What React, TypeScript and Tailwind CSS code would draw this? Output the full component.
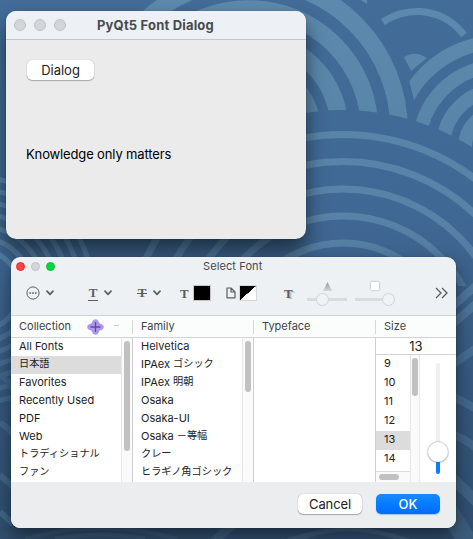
import React from "react";

const collections = ["All Fonts", "日本語", "Favorites", "Recently Used", "PDF", "Web", "トラディショナル", "ファン"];
const families = ["Helvetica", "IPAex ゴシック", "IPAex 明朝", "Osaka", "Osaka-UI", "Osaka －等幅", "クレー", "ヒラギノ角ゴシック"];
const sizes = ["9", "10", "11", "12", "13", "14"];

type Ring = { cx: number; cy: number; r: number; w: number };

const rings = (cx: number, cy: number, radii: number[], w: number): Ring[] => radii.map((r) => ({ cx, cy, r, w }));

function Rings({ items }: { items: Ring[] }) {
  return (
    <>
      {items.map((c) => (
        <circle key={`${c.cx}-${c.r}`} cx={c.cx} cy={c.cy} r={c.r} fill="none" stroke="url(#wave)" strokeWidth={c.w} />
      ))}
    </>
  );
}

function Wallpaper() {
  return (
    <svg className="absolute inset-0" width="473" height="539" viewBox="0 0 473 539">
      <defs>
        <linearGradient id="sea" gradientUnits="userSpaceOnUse" x1="0" y1="0" x2="0" y2="539">
          <stop offset="0" stopColor="#436c98" />
          <stop offset="0.4" stopColor="#406894" />
          <stop offset="0.7" stopColor="#36597f" />
          <stop offset="1" stopColor="#2f4e6f" />
        </linearGradient>
        <linearGradient id="wave" gradientUnits="userSpaceOnUse" x1="0" y1="0" x2="0" y2="539">
          <stop offset="0" stopColor="#5c89ad" />
          <stop offset="0.4" stopColor="#5882a7" />
          <stop offset="0.7" stopColor="#446a8f" />
          <stop offset="1" stopColor="#3d5f80" />
        </linearGradient>
      </defs>
      <rect width="473" height="539" fill="url(#sea)" />
      <path d="M361 0h6v4z" fill="url(#wave)" />
      <path d="M383 22Q399 11 420 11.5Q447 13 464 35" fill="none" stroke="url(#wave)" strokeWidth="7" />
      <circle cx="495" cy="141" r="104" fill="url(#sea)" />
      <path d="M404 57Q415 50 427 58L411 71Z" fill="url(#wave)" />
      <Rings items={rings(500, 147, [105, 81, 57, 35], 14)} />
      <circle cx="248.6" cy="130" r="168" fill="url(#sea)" />
      <Rings items={rings(248.6, 130, [150.5, 121, 91, 63, 30], 17.5)} />
      <Rings items={rings(-20, 290, [40, 52, 64, 76, 88, 100, 112], 5)} />
      <path d="M100 600V353A243 243 0 0 1 586 353V600Z" fill="url(#sea)" />
      <Rings items={rings(343, 353, [218.5, 191.5, 164, 137, 110], 7)} />
      <rect x="456" y="286" width="17" height="253" fill="url(#sea)" />
      <g stroke="url(#wave)" strokeWidth="8" fill="none">
        <path d="M453 306L478 284M454 323L478 302M453 364L478 347M453 397Q465 402 478 410M454 435Q465 439 478 449" />
        <path d="M450 476L478 503" strokeWidth="11" />
      </g>
      <rect y="528" width="473" height="11" fill="#304e6e" />
      <path d="M25 539Q100 517 178 539M55 539Q100 530 145 539" fill="none" stroke="#385775" strokeWidth="4" />
      <path d="M210 539L222 528H236L223 539ZM285 539Q350 516 410 539L395 539Q345 524 306 539ZM438 515L456 505L473 532V539H455Z" fill="#3d5d7c" />
      <path d="M0 375Q8 380 13 389M0 423Q8 427 13 435M0 475L13 487M0 512L13 524" stroke="#416688" strokeWidth="6" fill="none" />
    </svg>
  );
}

function Chevron() {
  return (
    <svg width="8" height="6" viewBox="0 0 8 6">
      <path d="M1 1.2L4 4.4L7 1.2" fill="none" stroke="#5c5f61" strokeWidth="1.7" strokeLinecap="round" strokeLinejoin="round" />
    </svg>
  );
}

function MiniSlider({ end }: { end?: boolean }) {
  return (
    <div className="flex w-10 flex-col items-center">
      <div className="flex h-[13px] items-center">
        {end ? (
          <div className="h-2 w-2 rounded-[1px] bg-white shadow-[0_0_2px_#888]" />
        ) : (
          <svg width="9" height="9" viewBox="0 0 9 9">
            <defs>
              <linearGradient id="tri" x1="0" y1="0" x2="0" y2="1">
                <stop offset="0" stopColor="#929597" />
                <stop offset="1" stopColor="#d5d8da" />
              </linearGradient>
            </defs>
            <path d="M4.5 0L9 9H0Z" fill="url(#tri)" />
          </svg>
        )}
      </div>
      <div className={`flex h-[14px] w-10 items-center ${end ? "justify-end" : "justify-center"} bg-[linear-gradient(#d9dcde,#d9dcde)] bg-[length:100%_3px] bg-center bg-no-repeat`}>
        <div className={`h-[13px] w-[13px] rounded-full border border-[#d0d3d5] bg-[#f0f2f4] ${end ? "" : "-ml-2.5"}`} />
      </div>
    </div>
  );
}

function Toolbar() {
  return (
    <div className="flex h-[37px] items-center pb-[3px] pl-[15px] font-['Liberation_Serif',serif] text-[15px] leading-none text-[#5c5f61]">
      <svg width="14" height="14" viewBox="0 0 14 14">
        <circle cx="7" cy="7" r="6.1" fill="none" stroke="#5c5f61" />
        <path d="M3.4 7h1.7M6.15 7h1.7M8.9 7h1.7" stroke="#5c5f61" strokeWidth="1.6" />
      </svg>
      <div className="ml-[6px] flex"><Chevron /></div>
      <div className="ml-[34px] h-[15px] w-[10px] border-b border-[#5c5f61] text-center text-[13px] font-bold leading-[14px]">T</div>
      <div className="ml-[6px] flex"><Chevron /></div>
      <div className="ml-[25px] h-[14px] w-[10px] bg-[linear-gradient(#5c5f61,#5c5f61)] bg-[length:100%_1px] bg-center bg-no-repeat text-center text-[13px] font-bold leading-[14px]">T</div>
      <div className="ml-[6px] flex"><Chevron /></div>
      <div className="ml-[19px] w-[9px] text-[13px] font-bold">T</div>
      <div className="ml-[4px] h-4 w-[18px] border border-[#c3c5c7] bg-black" />
      <svg className="ml-[15px]" width="10" height="12" viewBox="0 0 10 12">
        <path d="M1 1h4l4 4v5.8H1ZM5 1v4h4" fill="none" stroke="#5c5f61" strokeWidth="1.2" strokeLinejoin="round" />
      </svg>
      <div className="ml-[3px] h-4 w-[18px] border border-[#d5d7d9] bg-[linear-gradient(to_bottom_right,#000_50%,#fff_50.5%)]" />
      <div className="ml-[27px] w-[10px] text-[13px] font-bold [text-shadow:2px_1px_0_#c1c4c6]">T</div>
      <div className="ml-[13px] flex gap-2">
        <MiniSlider />
        <MiniSlider end />
      </div>
      <svg className="ml-[40px]" width="13" height="12" viewBox="0 0 13 12">
        <path d="M1 1L6 6L1 11M7 1L12 6L7 11" fill="none" stroke="#5c5f61" strokeWidth="1.3" />
      </svg>
    </div>
  );
}

function NameText({ text }: { text: string }) {
  const [latin, kana] = [text.replace(/[^\x00-\x7f]+$/, ""), text.match(/[^\x00-\x7f]+$/)?.[0]];
  return (
    <>
      {latin}
      {kana && <span className="align-[1px] font-['Noto_Sans_CJK_JP',sans-serif] text-[10.2px] leading-none">{kana}</span>}
    </>
  );
}

function NameList({ items, selected }: { items: string[]; selected?: number }) {
  return (
    <ul className="min-w-0 flex-1 overflow-hidden">
      {items.map((t, i) => (
        <li key={t} className={`h-[18px] whitespace-nowrap pl-2 leading-[17px] ${i === selected ? "bg-[#dcdcdc]" : ""}`}><NameText text={t} /></li>
      ))}
    </ul>
  );
}

function Header({ label, className, children }: { label: string; className: string; children?: React.ReactNode }) {
  return <div className={`flex h-[14px] items-center ${className}`}>{label}{children}</div>;
}

export default function App() {
  return (
    <main className="relative h-[539px] w-[473px] overflow-hidden font-['Inter','Noto_Sans_CJK_JP',sans-serif] text-[11px] text-[#222]">
      <Wallpaper />
      <section className="absolute left-[6px] top-[11px] h-[228px] w-[300px] overflow-hidden rounded-[10px] bg-[#ebebeb] shadow-[0_0_1px_#0008,0_12px_20px_#0008]">
        <header className="flex h-[29px] items-center border-b border-[#c3c7ca] bg-[#edf1f5] pl-2">
          <div className="flex gap-2">
            {[0, 1, 2].map((i) => <span key={i} className="h-3 w-3 rounded-full border border-[#bfc3c6] bg-[#d3d6d9]" />)}
          </div>
          <h1 className="ml-[31px] whitespace-nowrap text-[13px] font-bold leading-none tracking-[0.18px] text-[#484b4d]">PyQt5 Font Dialog</h1>
        </header>
        <div className="px-5 pt-5 text-[13px]">
          <button className="ml-px block h-5 w-[67px] rounded-[5px] bg-white leading-[19px] shadow-[0_0_1px_#0005,0_1px_1px_#0004]">Dialog</button>
          <p className="mt-[64px] leading-5 tracking-[-0.14px] text-black">Knowledge only matters</p>
        </div>
      </section>

      <section className="absolute left-[11px] top-[257px] flex h-[271px] w-[445px] flex-col overflow-hidden rounded-[9px] bg-[#edf1f3] shadow-[0_0_1px_#0008,0_8px_18px_#0007]">
        <header className="flex h-[19px] items-center pl-[5px]">
          <div className="flex gap-1.5">
            <span className="h-[9px] w-[9px] rounded-full border border-[#ec2d31] bg-[#ff4245]" />
            <span className="h-[9px] w-[9px] rounded-full border border-[#bfc3c6] bg-[#d3d6d8]" />
            <span className="h-[9px] w-[9px] rounded-full border border-[#08bd37] bg-[#00d543]" />
          </div>
          <h2 className="ml-[148px] leading-none tracking-[0.1px] text-[#45484a]">Select Font</h2>
        </header>
        <Toolbar />
        <div className="mt-[2px] flex h-[23px] shrink-0 items-center border-y border-[#d1d3d4] bg-[#fbfcfc] leading-none text-[#414345]">
          <Header label="Collection" className="w-[121px] pl-2">
            <svg className="ml-[16px]" width="17" height="16" viewBox="0 0 17 16">
              <path d="M8.5 0.2Q11 0.2 12 3.2Q12.3 4.4 13.5 4.7Q16.8 5.7 16.8 8Q16.8 10.3 13.5 11.3Q12.3 11.6 12 12.8Q11 15.8 8.5 15.8Q6 15.8 5 12.8Q4.7 11.6 3.5 11.3Q0.2 10.3 0.2 8Q0.2 5.7 3.5 4.7Q4.7 4.4 5 3.2Q6 0.2 8.5 0.2Z" fill="#ab9aec" />
              <path d="M8.5 3v10M3.5 8h10" stroke="#6844b1" strokeWidth="1.3" />
            </svg>
            <span className="mb-[3px] ml-[10px] h-px w-[5px] bg-[#c8cacb]" />
          </Header>
          <Header label="Family" className="w-[121px] border-l border-[#d5d7d8] pl-2" />
          <Header label="Typeface" className="w-[122px] border-l border-[#d5d7d8] pl-2" />
          <Header label="Size" className="flex-1 border-l border-[#d5d7d8] pl-2" />
        </div>
        <div className="flex h-[144px] shrink-0 bg-white">
          <div className="flex w-[122px] border-r border-[#cfcfcf]">
            <NameList items={collections} selected={1} />
            <div className="flex w-[11px] justify-center border-l border-[#e7e7e7] bg-[#fafafa] pt-[3px]"><span className="h-[110px] w-1.5 rounded-full bg-[#c1c1c1]" /></div>
          </div>
          <div className="flex w-[121px] border-r border-[#cfcfcf]">
            <NameList items={families} />
            <div className="flex w-[11px] justify-center border-l border-[#e7e7e7] bg-[#fafafa] pt-[3px]"><span className="h-[51px] w-1.5 rounded-full bg-[#c1c1c1]" /></div>
          </div>
          <div className="w-[122px] border-r border-[#cfcfcf]" />
          <div className="flex flex-1 flex-col">
            <div className="h-[17px] border-b border-[#d1d3d4] text-center text-[13px] leading-4">13</div>
            <div className="flex h-[127px]">
              <div className="w-[34px]">
                <ul className="h-[117px] border-b border-[#dedede]">
                  {sizes.map((s) => <li key={s} className={`h-[19px] pl-2 leading-[17px] ${s === "13" ? "bg-[#dcdcdc]" : ""}`}>{s}</li>)}
                </ul>
                <div className="flex h-[10px] items-center bg-[#fafafa] pl-[3px]"><span className="h-1.5 w-5 rounded-full bg-[#c1c1c1]" /></div>
              </div>
              <div className="flex w-[10px] justify-center border-x border-[#e7e7e7] bg-[#fafafa] pt-[3px]"><span className="h-[38px] w-1.5 shrink-0 rounded-full bg-[#c1c1c1]" /></div>
              <div className="flex flex-1 flex-col items-center pt-2">
                <span className="h-[79px] w-1 rounded-t-full bg-[#efefef]" />
                <span className="h-5 w-5 rounded-full bg-white shadow-[0_0_2px_#0007,0_1px_2px_#0003]" />
                <span className="h-3 w-1 rounded-b-full bg-[#087cff]" />
              </div>
            </div>
          </div>
        </div>
        <footer className="flex flex-1 justify-end gap-[14px] bg-[#ecedef] pr-4 pt-3 text-[13px]">
          <button className="h-5 w-16 rounded-[5px] bg-white leading-[19px] tracking-[-0.1px] shadow-[0_0_1px_#0006,0_1px_1px_#0004]">Cancel</button>
          <button className="h-5 w-16 rounded-[5px] bg-linear-to-b from-[#168bff] to-[#006bff] font-medium leading-[19px] text-white shadow-[0_1px_1px_#0072ff55]">OK</button>
        </footer>
      </section>
    </main>
  );
}
